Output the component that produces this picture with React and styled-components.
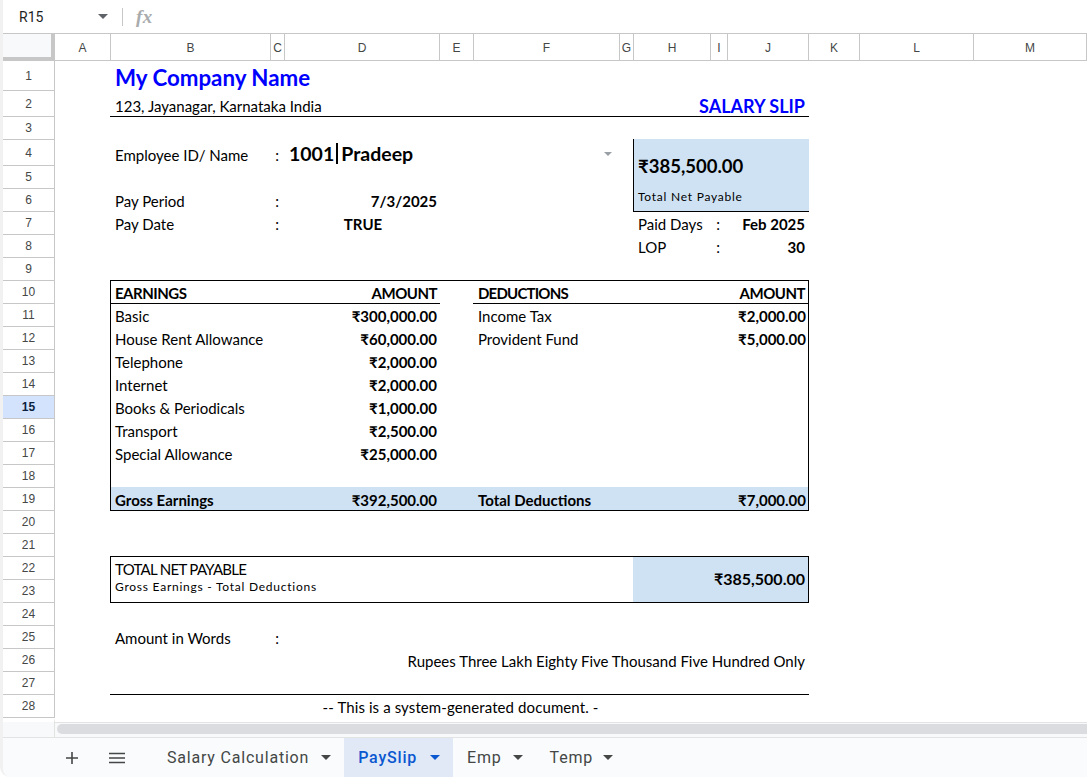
import React from 'react';
import styled, { createGlobalStyle, css } from 'styled-components';

const COLUMNS = [['A',56],['B',160],['C',14],['D',155],['E',34],['F',146],['G',14],['H',77],['I',17],['J',81],['K',51],['L',114],['M',113]];
const ROW_HEIGHTS = [30,26,23,26,23,23,23,23,23,23,23,23,23,23,23,23,23,23,23,23,23,23,23,23,23,23,23,23];
const SHEET_FONT = `Lato, "Noto Sans", sans-serif`;

const Global = createGlobalStyle`
  html, body { margin: 0; padding: 0; background: #fff; overflow: hidden; }
  * { box-sizing: border-box; }
`;

const Page = styled.div`
  width: 1087px;
  height: 777px;
  display: flex;
  flex-direction: column;
  border-left: 3px solid #f1f1f1;
  border-bottom-left-radius: 10px;
  overflow: hidden;
  background: #fff;
`;

const FormulaBar = styled.div`
  height: 34px;
  flex: none;
  display: flex;
  align-items: center;
  border-bottom: 1px solid #c7c7c7;
  font: 14px Roboto, sans-serif;
  color: #1f1f1f;
`;
const NameBox = styled.div`
  width: 120px;
  padding-left: 16px;
  padding-right: 14px;
  display: flex;
  align-items: center;
  justify-content: space-between;
  height: 18px;
  border-right: 1px solid #c7c7c7;
`;
const FxLabel = styled.span`
  margin-left: 13px;
  font: italic bold 19px "Liberation Serif", serif;
  color: #a9abad;
  letter-spacing: 0.5px;
`;
const Caret = styled.span`
  display: block;
  width: 0;
  height: 0;
  border-left: ${p => p.$size || 5}px solid transparent;
  border-right: ${p => p.$size || 5}px solid transparent;
  border-top: ${p => p.$size || 5}px solid ${p => p.$color || '#444746'};
`;

const ColumnBar = styled.div`
  flex: none;
  height: 27px;
  display: flex;
  font: 12px "Liberation Sans", sans-serif;
  color: #444746;
`;
const Corner = styled.div`
  width: 52px;
  background: #f8f9fa;
  border-right: 4px solid #c7c7c7;
  border-bottom: 4px solid #c7c7c7;
`;
const ColumnHead = styled.div`
  width: ${p => p.$w}px;
  flex: none;
  display: flex;
  align-items: center;
  justify-content: center;
  border-right: 1px solid #c7c7c7;
  border-bottom: 1px solid #c7c7c7;
  padding-top: 1px;
`;

const Body = styled.div`
  flex: none;
  height: 657px;
  display: flex;
`;
const RowBar = styled.div`
  width: 52px;
  flex: none;
  border-right: 1px solid #c7c7c7;
  font: 12px "Liberation Sans", sans-serif;
  color: #444746;
`;
const RowHead = styled.div`
  height: ${p => p.$h}px;
  display: flex;
  align-items: center;
  justify-content: center;
  border-bottom: 1px solid #c7c7c7;
  ${p => p.$active && css`
    background: #d3e3fd;
    font-weight: 700;
    color: #0b1f3f;
  `}
`;

const Sheet = styled.div`
  flex: 1;
  display: grid;
  grid-template-columns: ${COLUMNS.map(c => c[1] + 'px').join(' ')};
  grid-template-rows: ${ROW_HEIGHTS.map(h => h + 'px').join(' ')};
  align-content: start;
  font-family: ${SHEET_FONT};
  font-size: 15px;
  color: #000;
`;

const place = css`
  grid-column: ${p => p.$col} / span ${p => p.$span || 1};
  grid-row: ${p => p.$row} / span ${p => p.$rows || 1};
`;

const Cell = styled.div`
  ${place}
  display: flex;
  align-items: flex-end;
  justify-content: ${p => p.$align === 'right' ? 'flex-end' : p.$align === 'center' ? 'center' : 'flex-start'};
  padding: 0 ${p => p.$inset || 3}px 1px 4px;
  line-height: 20px;
  font-weight: ${p => p.$bold ? 700 : 400};
  letter-spacing: ${p => p.$track || 0}px;
  white-space: nowrap;
  z-index: 2;
`;
const CompanyName = styled(Cell)`
  color: #0000ff;
  font-size: 22.3px;
  font-weight: 700;
  line-height: 26px;
  padding-bottom: 0;
`;
const SlipTitle = styled(Cell)`
  color: #0000ff;
  font-size: 18px;
  font-weight: 700;
  padding-right: 4px;
`;
const EmployeeName = styled(Cell)`
  font-size: 19.5px;
  font-weight: 700;
  padding-bottom: 0;
  line-height: 24px;
`;
const Divider = styled.span`
  display: inline-block;
  width: 2px;
  height: 21px;
  margin: 0 3px 0 2px;
  background: #000;
  align-self: center;
`;
const NetAmount = styled(Cell)`
  font-size: 18.5px;
  font-weight: 700;
  align-items: center;
  padding-top: 4px;
`;
const SmallNote = styled(Cell)`
  font-size: 12px;
  letter-spacing: 0.75px;
  align-items: center;
  padding-bottom: ${p => p.$up || 0}px;
`;
const TotalAmount = styled(Cell)`
  font-size: 16px;
  font-weight: 700;
  align-items: center;
  padding-bottom: 3px;
`;
const ArrowCell = styled.div`
  ${place}
  display: flex;
  align-items: center;
  justify-content: flex-end;
  padding-right: 8px;
  padding-top: 2px;
  z-index: 2;
`;
const Colon = styled(Cell)`
  justify-content: center;
  padding: 0 ${p => p.$shift || 2}px 1px 0;
`;

const RuleBelow = styled.div`
  ${place}
  margin-left: -1px;
  border-bottom: 1px solid #000;
  z-index: 1;
`;
const Fill = styled.div`
  ${place}
  margin: -1px 0 0 -1px;
  background: #cfe2f3;
`;
const NetBox = styled(Fill)`
  border-left: 1px solid #000;
  border-bottom: 1px solid #000;
`;
const Frame = styled.div`
  ${place}
  margin: -1px 0 0 -1px;
  border: 1px solid #000;
  z-index: 3;
  pointer-events: none;
`;

const Gutter = styled.div`
  flex: none;
  height: 19px;
  display: flex;
`;
const GutterCorner = styled.div`
  width: 52px;
  border-right: 1px solid #e1e3e1;
  border-top: 4px solid #fff;
  background: #f8f9fa;
`;
const Track = styled.div`
  flex: 1;
  padding: 6px 0 0 2px;
  background: linear-gradient(#fff 0 4px, #e3e3e3 4px 5px, #f8f9fa 5px);
`;
const Thumb = styled.div`
  height: 10px;
  border-radius: 5px 0 0 5px;
  background: #dadce0;
`;

const TabBar = styled.div`
  flex: 1;
  display: flex;
  align-items: stretch;
  padding-left: 61px;
  background: #f9fbfd;
  border-top: 1px solid #e3e3e3;
  font: 400 16px Roboto, sans-serif;
  letter-spacing: 0.8px;
  color: #444746;
`;
const BarIcon = styled.button`
  all: unset;
  width: 16px;
  display: flex;
  align-items: center;
  justify-content: center;
  margin-right: ${p => p.$gap}px;
  color: #444746;
`;
const Tab = styled.div`
  display: flex;
  align-items: center;
  gap: ${p => p.$gap}px;
  padding: 0 13px 0 14px;
  ${p => p.$active && css`
    background: #e1e9f7;
    color: #0b57d0;
    font-weight: 500;
  `}
`;

const earnings = [
  ['Basic','₹300,000.00'],['House Rent Allowance','₹60,000.00'],['Telephone','₹2,000.00'],
  ['Internet','₹2,000.00'],['Books & Periodicals','₹1,000.00'],['Transport','₹2,500.00'],['Special Allowance','₹25,000.00'],
];
const deductions = [['Income Tax','₹2,000.00'],['Provident Fund','₹5,000.00']];
const tabs = [
  { name: 'Salary Calculation', gap: 12 },
  { name: 'PaySlip', gap: 13, active: true },
  { name: 'Emp', gap: 11 },
  { name: 'Temp', gap: 10 },
];

export default function App() {
  return (
    <Page>
      <Global />
      <FormulaBar>
        <NameBox>R15<Caret $color="#5f6368" /></NameBox>
        <FxLabel>fx</FxLabel>
      </FormulaBar>
      <ColumnBar>
        <Corner />
        {COLUMNS.map(([n, w]) => <ColumnHead key={n} $w={w}>{n}</ColumnHead>)}
      </ColumnBar>
      <Body>
        <RowBar>
          {ROW_HEIGHTS.map((h, i) => <RowHead key={i} $h={h} $active={i === 14}>{i + 1}</RowHead>)}
        </RowBar>
        <Sheet>
          <CompanyName $col={2} $row={1} $span={4}>My Company Name</CompanyName>
          <Cell $col={2} $row={2} $span={4}>123, Jayanagar, Karnataka India</Cell>
          <SlipTitle $col={8} $row={2} $span={3} $align="right">SALARY SLIP</SlipTitle>
          <RuleBelow $col={2} $row={2} $span={9} />

          <Cell $col={2} $row={4}>Employee ID/ Name</Cell>
          <Colon $col={3} $row={4}>:</Colon>
          <EmployeeName $col={4} $row={4} $span={3}>1001<Divider />Pradeep</EmployeeName>
          <ArrowCell $col={6} $row={4}><Caret $color="#9aa0a6" $size={4.5} /></ArrowCell>

          <NetBox $col={8} $row={4} $span={3} $rows={3} />
          <NetAmount $col={8} $row={4} $span={3} $rows={2}>₹385,500.00</NetAmount>
          <SmallNote $col={8} $row={6} $span={3} $up={8}>Total Net Payable</SmallNote>

          <Cell $col={2} $row={6}>Pay Period</Cell>
          <Colon $col={3} $row={6}>:</Colon>
          <Cell $col={4} $row={6} $align="right" $bold>7/3/2025</Cell>
          <Cell $col={2} $row={7}>Pay Date</Cell>
          <Colon $col={3} $row={7}>:</Colon>
          <Cell $col={4} $row={7} $align="center" $bold>TRUE</Cell>

          <Cell $col={8} $row={7}>Paid Days</Cell>
          <Colon $col={9} $row={7} $shift={3}>:</Colon>
          <Cell $col={10} $row={7} $align="right" $bold $inset={4}>Feb 2025</Cell>
          <Cell $col={8} $row={8}>LOP</Cell>
          <Colon $col={9} $row={8} $shift={3}>:</Colon>
          <Cell $col={10} $row={8} $align="right" $bold $inset={4}>30</Cell>

          <Frame $col={2} $row={10} $span={9} $rows={10} />
          <RuleBelow $col={2} $row={10} $span={3} />
          <RuleBelow $col={6} $row={10} $span={5} />
          <Cell $col={2} $row={10} $bold $track={-0.5}>EARNINGS</Cell>
          <Cell $col={4} $row={10} $align="right" $bold $track={-0.5}>AMOUNT</Cell>
          <Cell $col={6} $row={10} $bold $track={-0.8}>DEDUCTIONS</Cell>
          <Cell $col={8} $row={10} $span={3} $align="right" $bold $inset={4} $track={-0.5}>AMOUNT</Cell>

          {earnings.map(([label, amount], i) => (
            <React.Fragment key={label}>
              <Cell $col={2} $row={11 + i}>{label}</Cell>
              <Cell $col={4} $row={11 + i} $align="right" $bold>{amount}</Cell>
            </React.Fragment>
          ))}
          {deductions.map(([label, amount], i) => (
            <React.Fragment key={label}>
              <Cell $col={6} $row={11 + i}>{label}</Cell>
              <Cell $col={8} $row={11 + i} $span={3} $align="right" $bold>{amount}</Cell>
            </React.Fragment>
          ))}

          <Fill $col={2} $row={19} $span={9} />
          <Cell $col={2} $row={19} $bold>Gross Earnings</Cell>
          <Cell $col={4} $row={19} $align="right" $bold>₹392,500.00</Cell>
          <Cell $col={6} $row={19} $bold>Total Deductions</Cell>
          <Cell $col={8} $row={19} $span={3} $align="right" $bold>₹7,000.00</Cell>

          <Frame $col={2} $row={22} $span={9} $rows={2} />
          <Fill $col={8} $row={22} $span={3} $rows={2} />
          <Cell $col={2} $row={22} $span={3} $track={-0.7}>TOTAL NET PAYABLE</Cell>
          <SmallNote $col={2} $row={23} $span={3} $up={9}>Gross Earnings - Total Deductions</SmallNote>
          <TotalAmount $col={8} $row={22} $span={3} $rows={2} $align="right" $inset={4}>₹385,500.00</TotalAmount>

          <Cell $col={2} $row={25}>Amount in Words</Cell>
          <Colon $col={3} $row={25}>:</Colon>
          <Cell $col={4} $row={26} $span={7} $align="right" $inset={4}>Rupees Three Lakh Eighty Five Thousand Five Hundred Only</Cell>
          <RuleBelow $col={2} $row={27} $span={9} />
          <Cell $col={2} $row={28} $span={9} $align="center" $track={0.1}>-- This is a system-generated document. -</Cell>
        </Sheet>
      </Body>
      <Gutter>
        <GutterCorner />
        <Track><Thumb /></Track>
      </Gutter>
      <TabBar>
        <BarIcon $gap={29} aria-label="Add sheet">
          <svg width="14" height="14" viewBox="0 0 14 14"><path d="M7 1v12M1 7h12" stroke="currentColor" strokeWidth="1.6" fill="none" /></svg>
        </BarIcon>
        <BarIcon $gap={28} aria-label="All sheets">
          <svg width="16" height="12" viewBox="0 0 16 12"><path d="M0 1.5h16M0 6h16M0 10.5h16" stroke="currentColor" strokeWidth="1.5" fill="none" /></svg>
        </BarIcon>
        {tabs.map(t => (
          <Tab key={t.name} $active={t.active} $gap={t.gap}>
            {t.name}
            <Caret $color={t.active ? '#0b57d0' : '#444746'} $size={5} />
          </Tab>
        ))}
      </TabBar>
    </Page>
  );
}
